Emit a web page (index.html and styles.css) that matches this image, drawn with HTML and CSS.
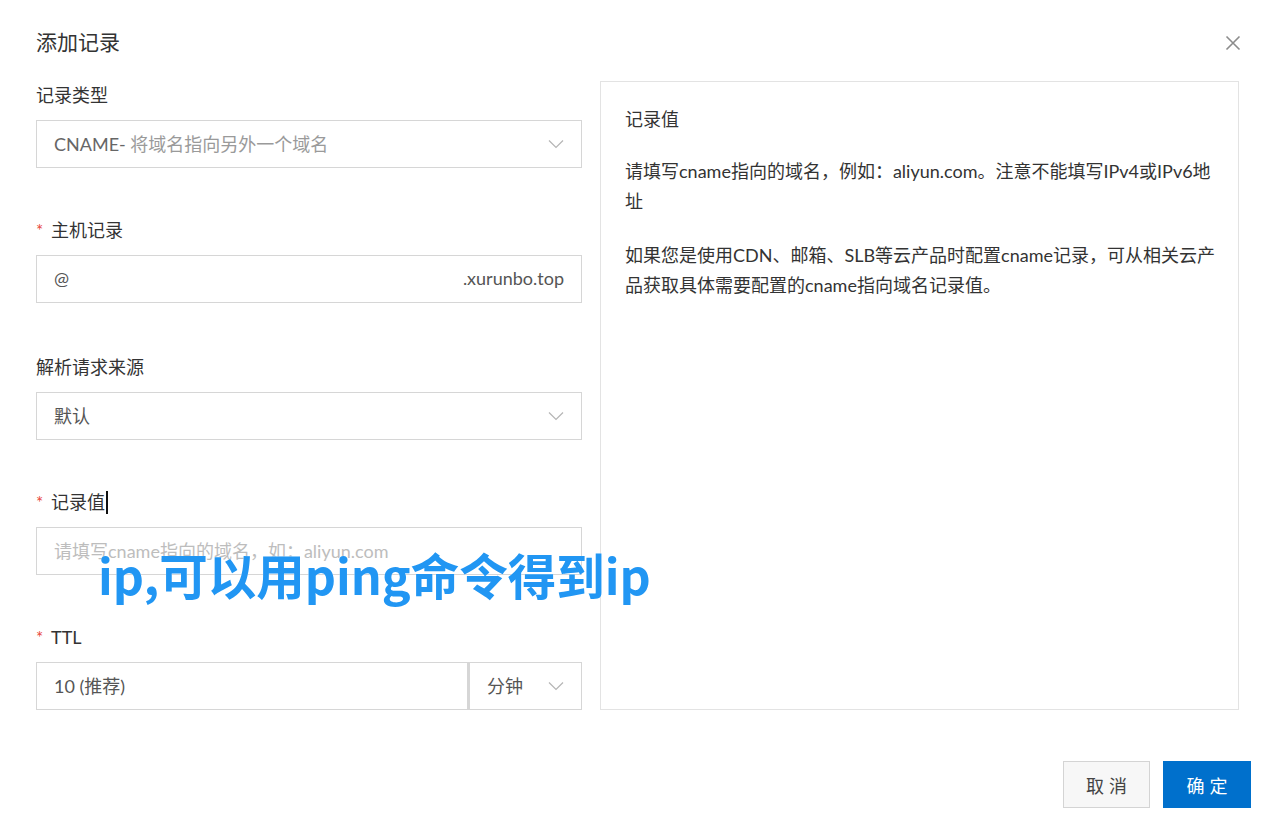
FILE: index.html
```html
<!DOCTYPE html>
<html lang="zh-CN">
<head>
<meta charset="utf-8">
<title>添加记录</title>
<link rel="stylesheet" href="styles.css">
</head>
<body>
<div class="dialog">
  <header class="dialog-header">
    <h1 class="dialog-title">添加记录</h1>
    <button class="close-btn" aria-label="关闭">
      <svg width="16" height="16" viewBox="0 0 16 16"><path d="M1.5 1.5 L14.5 14.5 M14.5 1.5 L1.5 14.5" stroke="#8c8c8c" stroke-width="1.6" fill="none"/></svg>
    </button>
  </header>

  <div class="dialog-body">
    <form class="form">
      <div class="form-item">
        <label class="form-label">记录类型</label>
        <div class="field select">
          <span class="value"><span class="strong">CNAME-</span> 将域名指向另外一个域名</span>
          <svg class="chevron" width="16" height="10" viewBox="0 0 16 10"><path d="M1 1.5 L8 8.5 L15 1.5" stroke="#b5b5b5" stroke-width="1.2" fill="none"/></svg>
        </div>
      </div>

      <div class="form-item item-host">
        <label class="form-label"><span class="req">*</span>主机记录</label>
        <div class="field input">
          <span class="value dark">@</span>
          <span class="suffix">.xurunbo.top</span>
        </div>
      </div>

      <div class="form-item">
        <label class="form-label">解析请求来源</label>
        <div class="field select">
          <span class="value dark">默认</span>
          <svg class="chevron" width="16" height="10" viewBox="0 0 16 10"><path d="M1 1.5 L8 8.5 L15 1.5" stroke="#b5b5b5" stroke-width="1.2" fill="none"/></svg>
        </div>
      </div>

      <div class="form-item">
        <label class="form-label"><span class="req">*</span>记录值<span class="caret"></span></label>
        <div class="field input">
          <span class="placeholder">请填写cname指向的域名，如：aliyun.com</span>
        </div>
      </div>

      <div class="form-item">
        <label class="form-label"><span class="req">*</span>TTL</label>
        <div class="field-group">
          <div class="field input grow">
            <span class="value dark">10 (推荐)</span>
          </div>
          <div class="field select unit">
            <span class="value dark">分钟</span>
            <svg class="chevron" width="16" height="10" viewBox="0 0 16 10"><path d="M1 1.5 L8 8.5 L15 1.5" stroke="#b5b5b5" stroke-width="1.2" fill="none"/></svg>
          </div>
        </div>
      </div>
    </form>

    <aside class="help-panel">
      <h2 class="help-title">记录值</h2>
      <p class="help-text">请填写cname指向的域名，例如：aliyun.com。注意不能填写IPv4或IPv6地址</p>
      <p class="help-text second">如果您是使用CDN、邮箱、SLB等云产品时配置cname记录，可从相关云产品获取具体需要配置的cname指向域名记录值。</p>
    </aside>
  </div>

  <footer class="dialog-footer">
    <button class="btn btn-cancel">取消</button>
    <button class="btn btn-primary">确定</button>
  </footer>

  <div class="overlay-note">ip,可以用ping命令得到ip</div>
</div>
</body>
</html>
```

FILE: styles.css
```css
* { box-sizing: border-box; }

html, body {
  margin: 0;
  padding: 0;
  background: #ffffff;
}

body {
  font-family: Lato, "Noto Sans CJK SC", sans-serif;
  font-size: 18px;
  color: #333333;
}

.dialog {
  position: relative;
  width: 1275px;
  height: 824px;
  background: #ffffff;
  padding-top: 26px;
}

.dialog-header {
  display: flex;
  justify-content: space-between;
  align-items: center;
  height: 32px;
  padding: 0 34px 0 36px;
}

.dialog-title {
  margin: 0;
  font-size: 21px;
  font-weight: 400;
  line-height: 32px;
  color: #333333;
}

.close-btn {
  display: flex;
  align-items: center;
  justify-content: center;
  width: 16px;
  height: 16px;
  padding: 0;
  border: 0;
  background: transparent;
  margin-top: 2px;
}

.dialog-body {
  display: flex;
  gap: 18px;
  margin-top: 23px;
  padding: 0 36px;
  height: 629px;
}

.form {
  width: 546px;
  flex: none;
  padding-top: 2px;
  display: flex;
  flex-direction: column;
}

.form-item {
  margin-bottom: 50px;
}

.form-item:last-child {
  margin-bottom: 0;
}

.item-host {
  margin-bottom: 52px;
}

.form-label {
  display: flex;
  align-items: center;
  height: 24px;
  line-height: 24px;
  margin-bottom: 13px;
  font-size: 18px;
  color: #333333;
}

.req {
  color: #e8483b;
  font-size: 17px;
  width: 15px;
  flex: none;
  padding-top: 2px;
}

.caret {
  display: inline-block;
  width: 2px;
  height: 23px;
  background: #111111;
  margin-left: 1px;
}

.field {
  display: flex;
  align-items: center;
  height: 48px;
  border: 1px solid #d6d6d6;
  padding: 0 17px 2px;
  background: #ffffff;
}

.field .value {
  color: #9a9a9a;
  white-space: nowrap;
}

.field .value .strong {
  color: #666666;
}

.field .value.dark {
  color: #555555;
}

.field .suffix {
  margin-left: auto;
  color: #555555;
}

.field .placeholder {
  color: #bdbdbd;
  white-space: nowrap;
}

.select {
  justify-content: space-between;
  padding-right: 17px;
}

.chevron {
  flex: none;
  margin-top: 2px;
}

.field-group {
  display: flex;
}

.field-group .grow {
  flex: 1;
}

.field-group .unit {
  width: 114px;
  flex: none;
  border-left: 2px solid #d6d6d6;
}

.help-panel {
  flex: 1;
  border: 1px solid #e3e3e3;
  padding: 22px 20px 22px 24px;
  color: #333333;
}

.help-title {
  margin: 0;
  font-size: 18px;
  font-weight: 400;
  line-height: 30px;
}

.help-text {
  margin: 22px 0 0;
  font-size: 18px;
  line-height: 30px;
}

.help-text.second {
  margin-top: 24px;
}

.dialog-footer {
  display: flex;
  justify-content: flex-end;
  gap: 13px;
  margin-top: 51px;
  padding: 0 24px;
}

.btn {
  height: 47px;
  padding: 0;
  font-family: inherit;
  font-size: 18px;
  letter-spacing: 5px;
  text-indent: 5px;
  border-radius: 0;
  cursor: pointer;
}

.btn-cancel {
  width: 87px;
  background: #f7f7f7;
  border: 1px solid #d4d4d4;
  color: #444444;
}

.btn-primary {
  width: 88px;
  background: #0070cc;
  border: 1px solid #0070cc;
  color: #ffffff;
}

.overlay-note {
  position: absolute;
  left: 98px;
  top: 548px;
  font-family: "Noto Sans CJK SC", sans-serif;
  font-size: 48.5px;
  font-weight: 700;
  line-height: 52px;
  color: #2196f3;
  white-space: nowrap;
  text-shadow: 0 0 1px #ffffff;
}
```
